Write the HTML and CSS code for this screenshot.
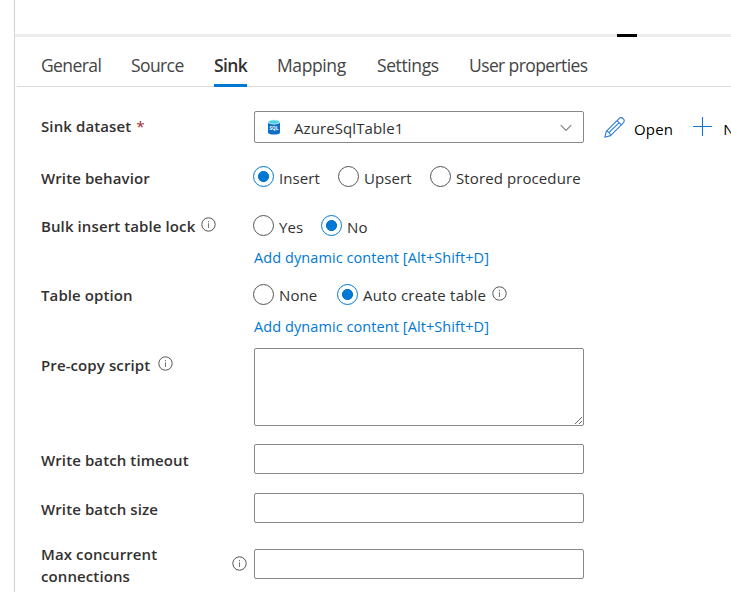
FILE: index.html
```
<!DOCTYPE html>
<html lang="en">

<head>
    <meta charset="utf-8">
    <title>Copy data - Sink</title>
    <link rel="stylesheet" href="styles.css">
</head>

<body>
    <svg width="0" height="0" class="defs">
        <symbol id="info" viewBox="0 0 15 15">
            <circle cx="7.5" cy="7.5" r="6.7" fill="none" stroke="#555" stroke-width="1"/>
            <path d="M7.5 6.2V11M7.5 4v1.2" stroke="#777" stroke-width="1.1"/>
        </symbol>
    </svg>

    <div class="panel">
        <div class="splitter"><div class="handle"></div></div>

        <nav class="tabs">
            <a class="tab general">General</a>
            <a class="tab source">Source</a>
            <a class="tab active">Sink</a>
            <a class="tab mapping">Mapping</a>
            <a class="tab settings">Settings</a>
            <a class="tab user">User properties</a>
        </nav>

        <form class="form">
            <div class="row dataset">
                <label class="label">Sink dataset <span class="required">*</span></label>
                <div class="select">
                    <svg class="sql" width="14" height="16" viewBox="0 0 14 16">
                        <path d="M1 3v10.4C1 14.7 3.6 15.6 7 15.6s6-.9 6-2.2V3z" fill="#0f6fc4"/>
                        <ellipse cx="7" cy="3" rx="6" ry="2.5" fill="#dcf5fa"/>
                        <ellipse cx="7" cy="3" rx="5" ry="1.7" fill="#45d0e8"/>
                        <text x="7" y="10.6" text-anchor="middle">SQL</text>
                    </svg>
                    <span class="value">AzureSqlTable1</span>
                    <svg class="chevron" width="12" height="8" viewBox="0 0 12 8">
                        <path d="M.7 1.2 6 6.5l5.3-5.3" fill="none" stroke="#7a8288" stroke-width="1.1"/>
                    </svg>
                </div>
                <a class="action">
                    <svg class="pencil" width="21" height="21" viewBox="0 0 21 21" fill="none" stroke="#2a7cd6" stroke-width="1.1" stroke-linejoin="round">
                        <path d="M.8 20.2 2.3 14.3 14.8 1.8C16.2.4 18 .5 19.2 1.7s1.3 3-.1 4.4L6.6 18.6z"/>
                        <path d="M2.3 14.3c1.8-.2 4.3 2.2 4.3 4.3M13 3.6l4.4 4.3M4.7 15.9 15.2 5.6"/>
                    </svg>
                    <span class="open">Open</span>
                </a>
                <a class="action new">
                    <svg width="19" height="19" viewBox="0 0 19 19">
                        <path d="M9.5 0v19M0 9.5h19" stroke="#1474cf" stroke-width="1.1"/>
                    </svg>
                    <span>New</span>
                </a>
            </div>

            <div class="row behavior">
                <label class="label">Write behavior</label>
                <label class="radio insert"><input type="radio" name="behavior" checked><span>Insert</span></label>
                <label class="radio upsert"><input type="radio" name="behavior"><span>Upsert</span></label>
                <label class="radio"><input type="radio" name="behavior"><span>Stored procedure</span></label>
            </div>

            <div class="row lock">
                <label class="label">Bulk insert table lock <svg class="info"><use href="#info"/></svg></label>
                <label class="radio yes"><input type="radio" name="lock"><span>Yes</span></label>
                <label class="radio"><input type="radio" name="lock" checked><span>No</span></label>
            </div>
            <a class="dynamic">Add dynamic content [Alt+Shift+D]</a>

            <div class="row option">
                <label class="label">Table option</label>
                <label class="radio none"><input type="radio" name="option"><span>None</span></label>
                <label class="radio auto"><input type="radio" name="option" checked><span>Auto create table</span></label>
                <svg class="info"><use href="#info"/></svg>
            </div>
            <a class="dynamic">Add dynamic content [Alt+Shift+D]</a>

            <div class="row script">
                <label class="label">Pre-copy script <svg class="info"><use href="#info"/></svg></label>
                <textarea></textarea>
            </div>

            <div class="row timeout">
                <label class="label">Write batch timeout</label>
                <input type="text">
            </div>

            <div class="row size">
                <label class="label">Write batch size</label>
                <input type="text">
            </div>

            <div class="row connections">
                <label class="label"><span>Max concurrent connections</span> <svg class="info"><use href="#info"/></svg></label>
                <input type="text">
            </div>
        </form>
    </div>
</body>

</html>
```
FILE: styles.css
```
* {
    box-sizing: border-box;
}

body {
    margin: 0;
    height: 592px;
    overflow: hidden;
    background: #fff;
    color: #323130;
    font-family: "Open Sans", "Noto Sans", sans-serif;
    font-size: 15px;
    line-height: 22px;
}

svg {
    display: block;
    flex: none;
}

.defs {
    position: absolute;
}

.panel {
    height: 592px;
    margin-left: 14px;
    padding-top: 34px;
    border-left: 1px solid #d2d2d2;
}

.splitter {
    height: 3px;
    background: #ededed;
}

.handle {
    width: 20px;
    height: 3px;
    margin-left: 602px;
    background: #000;
}

.tabs {
    display: flex;
    gap: 30px;
    height: 50px;
    margin-left: 2px;
    padding-left: 24px;
    border-bottom: 1px solid #dcdcdc;
    font-size: 17.5px;
    letter-spacing: -0.6px;
    white-space: nowrap;
}

.tab {
    height: 50px;
    padding-top: 17px;
    color: #444;
}

.general {
    width: 60px;
}

.source {
    width: 53px;
}

.tab.active {
    width: 33px;
    border-bottom: 3px solid #0078d4;
    color: #323130;
    font-weight: 600;
}

.mapping {
    width: 70px;
    letter-spacing: -0.4px;
}

.settings {
    width: 62px;
    letter-spacing: -0.4px;
}

.form {
    padding: 24px 0 0 26px;
}

.row {
    display: flex;
    align-items: flex-start;
    white-space: nowrap;
}

.label {
    display: flex;
    flex: none;
    width: 213px;
    font-weight: 600;
    font-size: 15px;
    letter-spacing: 0.1px;
}

.required {
    margin-left: 5px;
    color: #a4262c;
    font-weight: 400;
}

.info {
    width: 15px;
    height: 15px;
    margin-left: 6px;
}

.select,
textarea,
input[type=text] {
    width: 330px;
    border: 1px solid #8a8886;
    border-radius: 2px;
    background: #fff;
}

.select {
    display: flex;
    flex: none;
    height: 32px;
    padding: 0 11px 0 12px;
}

.sql {
    margin-top: 7px;
}

.sql text {
    fill: #fff;
    font-size: 4.6px;
    font-weight: 700;
}

.value {
    flex: 1;
    margin: 5px 0 0 13px;
    letter-spacing: 0.1px;
}

.chevron {
    margin-top: 12px;
}

.action {
    display: flex;
    margin-left: 20px;
    color: #000;
}

.action svg {
    margin-top: 6px;
}

.action span {
    margin: 7px 0 0 9px;
    letter-spacing: 0.2px;
}

.action.new span {
    margin-left: 11px;
}

.dataset {
    height: 32px;
}

.dataset .label {
    padding-top: 4px;
}

.radio {
    display: flex;
    flex: none;
    margin-left: -1px;
    letter-spacing: 0.1px;
}

.radio input {
    appearance: none;
    flex: none;
    width: 21px;
    height: 21px;
    margin: 0 5px 0 0;
    border: 1px solid #555;
    border-radius: 50%;
}

.radio input:checked {
    border-color: #0078d4;
    background: radial-gradient(circle, #0078d4 5.2px, transparent 5.8px);
}

.radio span {
    padding-top: 1px;
}

.insert {
    width: 86px;
}

.upsert {
    width: 93px;
}

.yes {
    width: 69px;
}

.none {
    width: 85px;
}

.auto {
    letter-spacing: 0.2px;
}

.behavior {
    height: 21px;
    margin-top: 23px;
}

.behavior .label {
    padding-top: 1px;
}

.lock {
    height: 21px;
    margin-top: 28px;
}

.lock .info {
    margin-top: 2px;
}

.dynamic {
    display: block;
    margin: 11px 0 0 213px;
    color: #0078d4;
    font-size: 14.5px;
    letter-spacing: 0.08px;
}

.option {
    height: 21px;
    margin-top: 15px;
}

.option .radio span {
    padding-top: 0;
}

.option .info {
    margin-top: 2px;
}

.script {
    height: 78px;
    margin-top: 10px;
}

.script .label {
    padding-top: 6px;
}

.script .info {
    margin: 2px 0 0 8px;
}

textarea {
    height: 78px;
    margin: 0;
    resize: vertical;
}

input[type=text] {
    height: 30px;
    padding: 0 8px;
}

.timeout {
    margin-top: 18px;
}

.timeout .label,
.size .label {
    padding-top: 5px;
}

.size {
    margin-top: 19px;
}

.connections {
    align-items: center;
    height: 44px;
    margin-top: 19px;
}

.connections .label {
    align-items: center;
    justify-content: space-between;
    padding: 2px 7px 0 0;
    white-space: normal;
}

.connections .label span {
    width: 150px;
}

.connections .info {
    margin-bottom: 3px;
}
```
